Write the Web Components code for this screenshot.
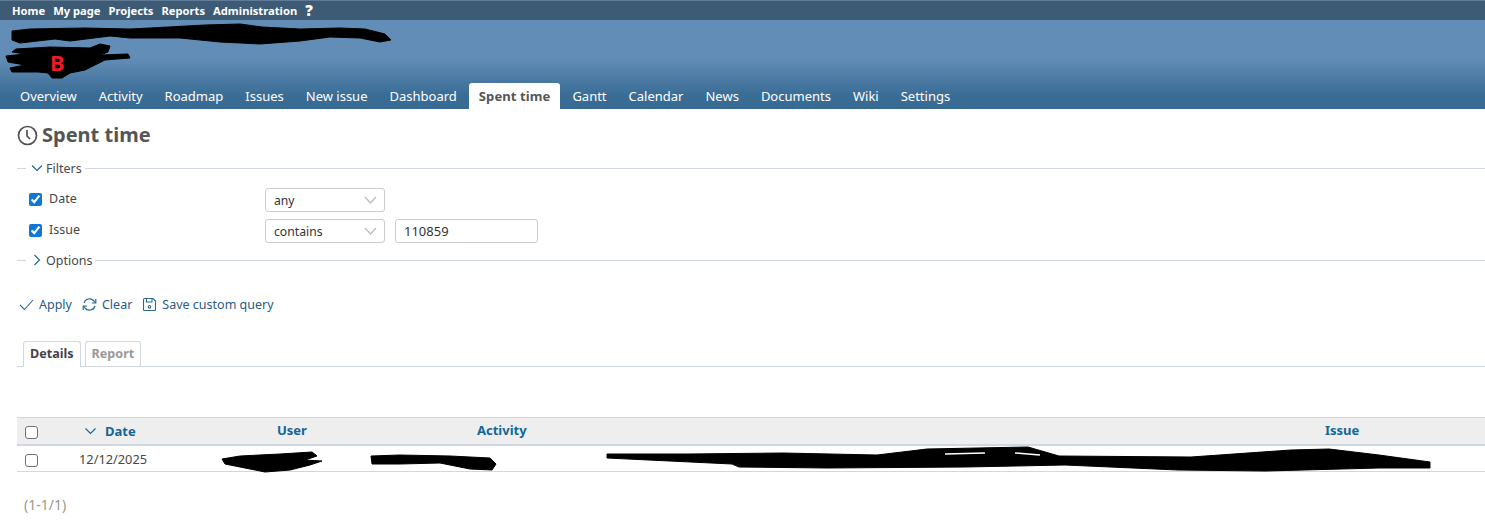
<!DOCTYPE html>
<html lang="en">
<head>
  <meta charset="UTF-8">
  <title>Spent time</title>
  <style>
    html, body { margin: 0; padding: 0; background: #fff; }
    body { font-family: "Noto Sans", sans-serif; font-size: 13px; color: #484848; width: 1485px; height: 526px; overflow: hidden; position: relative; }
  </style>
</head>
<body>
  <top-menu></top-menu>
  <app-header></app-header>
  <time-page></time-page>
  <redaction-marks></redaction-marks>

  <template id="top-menu-tpl">
    <style>
      :host { display: flex; height: 20px; box-sizing: border-box; background: #3e5b76; border-top: 1px solid #5f7b95; padding-left: 12px; gap: 8px; align-items: center; font: bold 11.200px "Noto Sans", sans-serif; color: #fff; }
      b { font-size: 15px; line-height: 15px; }
    </style>
    <span>Home</span><span>My page</span><span>Projects</span><span>Reports</span><span>Administration</span><b>?</b>
  </template>

  <template id="header-tpl">
    <style>
      :host { display: block; height: 89px; position: relative; background: linear-gradient(#628db6 0, #628db6 38px, #3a6d96 75px, #376b94 100%); }
      nav { position: absolute; left: 9px; right: 0; bottom: 0; display: flex; height: 26px; align-items: stretch; color: #fff; font: 13px "Noto Sans", sans-serif; }
      nav span { padding: 0 11px; line-height: 27px; }
      nav span.on { background: #fff; color: #555; font-weight: bold; letter-spacing: .1px; border-radius: 3px 3px 0 0; padding: 0 10px; margin: 0 1px; }
    </style>
    <nav>
      <span>Overview</span><span>Activity</span><span>Roadmap</span><span>Issues</span><span>New issue</span><span>Dashboard</span><span class="on">Spent time</span><span>Gantt</span><span>Calendar</span><span>News</span><span>Documents</span><span>Wiki</span><span>Settings</span>
    </nav>
  </template>

  <template id="legend-tpl">
    <style>
      :host { display: flex; align-items: center; height: 18px; color: #484848; font: 12.500px "Noto Sans", sans-serif; }
      .dash { width: 9px; height: 1px; background: #d0d7de; margin-right: 5px; }
      svg { width: 12px; height: 12px; margin-right: 3px; }
      .rule { flex: 1; height: 1px; background: #d0d7de; margin-left: 3px; }
    </style>
    <i class="dash"></i><svg viewBox="0 0 12 12" fill="none" stroke="#169" stroke-width="1.1"><path id="arrow" d="M1 3.500 6 8.500 11 3.500"/></svg><slot></slot><i class="rule"></i>
  </template>

  <template id="select-tpl">
    <style>
      :host { display: flex; align-items: center; justify-content: space-between; box-sizing: border-box; width: 120px; height: 24px; padding: 0 7px 0 8px; border: 1px solid #ccc; border-radius: 3px; background: #fff; color: #333; font: 12.200px "Noto Sans", sans-serif; }
      svg { width: 13px; height: 8px; }
    </style>
    <slot></slot><svg viewBox="0 0 13 8" fill="none" stroke="#bdbdca" stroke-width="1.3"><path d="M1 1 6.500 7 12 1"/></svg>
  </template>

  <template id="filter-row-tpl">
    <style>
      :host { display: flex; align-items: center; height: 24px; font: 12.500px "Noto Sans", sans-serif; color: #484848; }
      input { appearance: auto; accent-color: #0f78d4; width: 13px; height: 13px; margin: -1px 7px 0 0; }
      label { width: 216px; margin-top: -3px; }
      .val { box-sizing: border-box; width: 143px; height: 24px; margin-left: 10px; padding: 0 8px; border: 1px solid #ccc; border-radius: 3px; color: #333; font: 13px/22px "Noto Sans", sans-serif; }
    </style>
    <input type="checkbox" checked><label></label><select-box></select-box>
  </template>

  <template id="action-tpl">
    <style>
      :host { display: inline-flex; align-items: center; gap: 5px; color: #2a5a85; font: 12.500px "Noto Sans", sans-serif; }
      ::slotted(svg) { width: 15px; height: 15px; }
    </style>
    <slot name="icon"></slot><slot></slot>
  </template>

  <template id="tabs-tpl">
    <style>
      :host { display: flex; box-sizing: border-box; height: 26px; padding-left: 6px; gap: 4px; border-bottom: 1px solid #d0d7de; font: bold 12.600px "Noto Sans", sans-serif; }
      span { box-sizing: border-box; height: 26px; padding: 0 6px; line-height: 24px; border: 1px solid #d0d7de; border-bottom: 0; border-radius: 3px 3px 0 0; color: #999; }
      span.on { color: #444; background: #fff; }
    </style>
    <span class="on">Details</span><span>Report</span>
  </template>

  <template id="table-tpl">
    <style>
      :host { display: block; font: 13px "Noto Sans", sans-serif; color: #484848; }
      .row { display: grid; grid-template-columns: 45px 173px 200px 848px 1fr; align-items: center; }
      .head { height: 29px; box-sizing: border-box; background: #eee; border-top: 1px solid #d0d7de; border-bottom: 2px solid #d0d7de; color: #169; font-weight: bold; }
      .body { height: 26px; box-sizing: border-box; border-bottom: 1px solid #d0d7de; }
      .check { display: flex; padding-left: 8px; }
      .check i { box-sizing: border-box; display: block; width: 13px; height: 13px; background: #fff; border: 1px solid #707070; border-radius: 3px; }
      .head .check i { margin-top: 3px; }
      .body .check i { margin-top: 4px; }
      .h { padding-left: 42px; margin-top: -2px; }
      .date { padding-left: 23px; display: flex; align-items: center; gap: 9px; }
      .date svg { width: 11px; height: 8px; }
      .d { padding-left: 17px; font-size: 12.800px; }
    </style>
    <div class="row head">
      <span class="check"><i></i></span>
      <span class="date"><svg viewBox="0 0 11 8" fill="none" stroke="#169" stroke-width="1.1"><path d="M.5 1.500 5.500 6.500 10.500 1.500"/></svg>Date</span>
      <span class="h">User</span><span class="h">Activity</span><span class="h">Issue</span>
    </div>
    <div class="row body">
      <span class="check"><i></i></span>
      <span class="d">12/12/2025</span><span></span><span></span><span></span>
    </div>
  </template>

  <template id="page-tpl">
    <style>
      :host { display: block; padding-left: 17px; font: 13px "Noto Sans", sans-serif; color: #484848; }
      h2 { display: flex; align-items: center; gap: 4px; margin: 0; padding-top: 12px; height: 28px; font-size: 20px; line-height: 28px; color: #555; font-weight: bold; }
      h2 svg { width: 21px; height: 21px; margin-top: 1px; }
      .filters-head { margin-top: 10px; }
      .filters { padding: 11px 0 0 12px; display: flex; flex-direction: column; gap: 7px; }
      .options-head { margin-top: 8px; }
      .actions { display: flex; gap: 10px; margin-top: 26px; height: 18px; padding-left: 2px; }
      tab-strip { margin-top: 28px; }
      time-table { margin-top: 50px; }
      .pages { margin: 23px 0 0 7px; color: #998; font-size: 14px; }
    </style>
    <h2><svg viewBox="0 0 21 21" fill="none" stroke="#505050" stroke-width="1.7"><circle cx="10.500" cy="10.500" r="9"/><path d="M10 5v6l3 3"/></svg>Spent time</h2>
    <filter-legend class="filters-head" open>Filters</filter-legend>
    <div class="filters">
      <filter-row label="Date" op="any"></filter-row>
      <filter-row label="Issue" op="contains" value="110859"></filter-row>
    </div>
    <filter-legend class="options-head">Options</filter-legend>
    <div class="actions">
      <query-action><svg slot="icon" viewBox="0 0 15 15" fill="none" stroke="#2a6a96" stroke-width="1.1"><path d="M1 8 5.500 12.500 14 3"/></svg>Apply</query-action>
      <query-action><svg slot="icon" viewBox="0 0 15 15" fill="none" stroke="#2a6a96" stroke-width="1.200"><path d="M2 6a5.800 5.800 0 0 1 10-2l1.500 2M13 9a5.800 5.800 0 0 1-10 2L1.500 9"/><path d="M13.800 2v4h-4M1.200 13V9h4"/></svg>Clear</query-action>
      <query-action><svg slot="icon" viewBox="0 0 15 15" fill="none" stroke="#2a6a96" stroke-width="1.100"><path d="M1.500 2.500a1 1 0 0 1 1-1h8.500l2.500 2.500v8.500a1 1 0 0 1-1 1h-10a1 1 0 0 1-1-1z"/><path d="M4.500 1.500v3.500h5.500V1.500"/><circle cx="7.500" cy="9.800" r="1.300"/></svg>Save custom query</query-action>
    </div>
    <tab-strip></tab-strip>
    <time-table></time-table>
    <div class="pages">(1-1/1)</div>
  </template>

  <template id="marks-tpl">
    <style>
      :host { position: absolute; left: 0; top: 0; width: 1485px; height: 526px; pointer-events: none; }
      svg { display: block; }
      .b { position: absolute; left: 50px; top: 47px; color: #ed1c24; font: bold 22px/30px "Noto Sans", sans-serif; }
    </style>
    <svg width="1485" height="526" viewBox="0 0 1485 526" fill="#000" stroke="#000" stroke-linejoin="round">
      <path d="M12 31 30 29 85 28 130 29 150 28 205 25 240 24 262 27 300 29 340 28 365 29 385 34 391 40 380 42 360 38 330 37 300 41 260 44 220 42 180 38 130 38 110 36 70 41 55 39 20 43 12 40z"/>
      <path d="M16 49 50 47 90 48 100 44 110 46 108 52 100 55 128 54 130 58 105 60 85 70 70 73 62 78 52 78 48 73 38 72 12 72 10 68 25 65 8 62 6 56 25 54 12 52z"/>
      <path d="M222 459 240 456 280 454 312 452 317 456 305 460 322 461 310 465 290 470 265 472 245 468 225 464z"/>
      <path d="M371 456 400 455 450 456 490 458 496 464 492 470 470 469 440 463 400 464 372 464z"/>
      <path d="M607 454 688 454 783 453 877 455 927 449 977 448 1028 447 1059 456 1191 457 1291 450 1329 449 1379 455 1430 462 1430 468 1379 468 1266 471 1178 470 1065 465 965 467 827 468 739 467 732 464 607 458z"/>
      <path fill="none" stroke="#fff" stroke-width="1.500" d="M945 454 985 453M1015 453 1040 455"/>
    </svg>
    <span class="b">B</span>
  </template>

  <script>
    // small helper: attach an open shadow root from a template
    function fromTemplate(el, id) {
      const shadow = el.attachShadow({mode: 'open'});
      shadow.appendChild(document.getElementById(id).content.cloneNode(true));
      return shadow;
    }

    function simple(tag, tpl) {
      customElements.define(tag, class extends HTMLElement {
        constructor() { super(); fromTemplate(this, tpl); }
      });
    }

    simple('top-menu', 'top-menu-tpl');
    simple('app-header', 'header-tpl');
    simple('select-box', 'select-tpl');
    simple('query-action', 'action-tpl');
    simple('tab-strip', 'tabs-tpl');
    simple('time-table', 'table-tpl');
    simple('time-page', 'page-tpl');
    simple('redaction-marks', 'marks-tpl');

    class FilterLegend extends HTMLElement {
      constructor() { super(); fromTemplate(this, 'legend-tpl'); }
      connectedCallback() {
        if (!this.hasAttribute('open')) {
          this.shadowRoot.getElementById('arrow').setAttribute('d', 'M3.500 1 8.500 6 3.500 11');
        }
      }
    }
    customElements.define('filter-legend', FilterLegend);

    class FilterRow extends HTMLElement {
      constructor() { super(); fromTemplate(this, 'filter-row-tpl'); }
      connectedCallback() {
        const s = this.shadowRoot;
        s.querySelector('label').textContent = this.getAttribute('label');
        s.querySelector('select-box').textContent = this.getAttribute('op');
        if (this.hasAttribute('value')) {
          const v = document.createElement('div');
          v.className = 'val';
          v.textContent = this.getAttribute('value');
          s.appendChild(v);
        }
      }
    }
    customElements.define('filter-row', FilterRow);
  </script>
</body>
</html>
